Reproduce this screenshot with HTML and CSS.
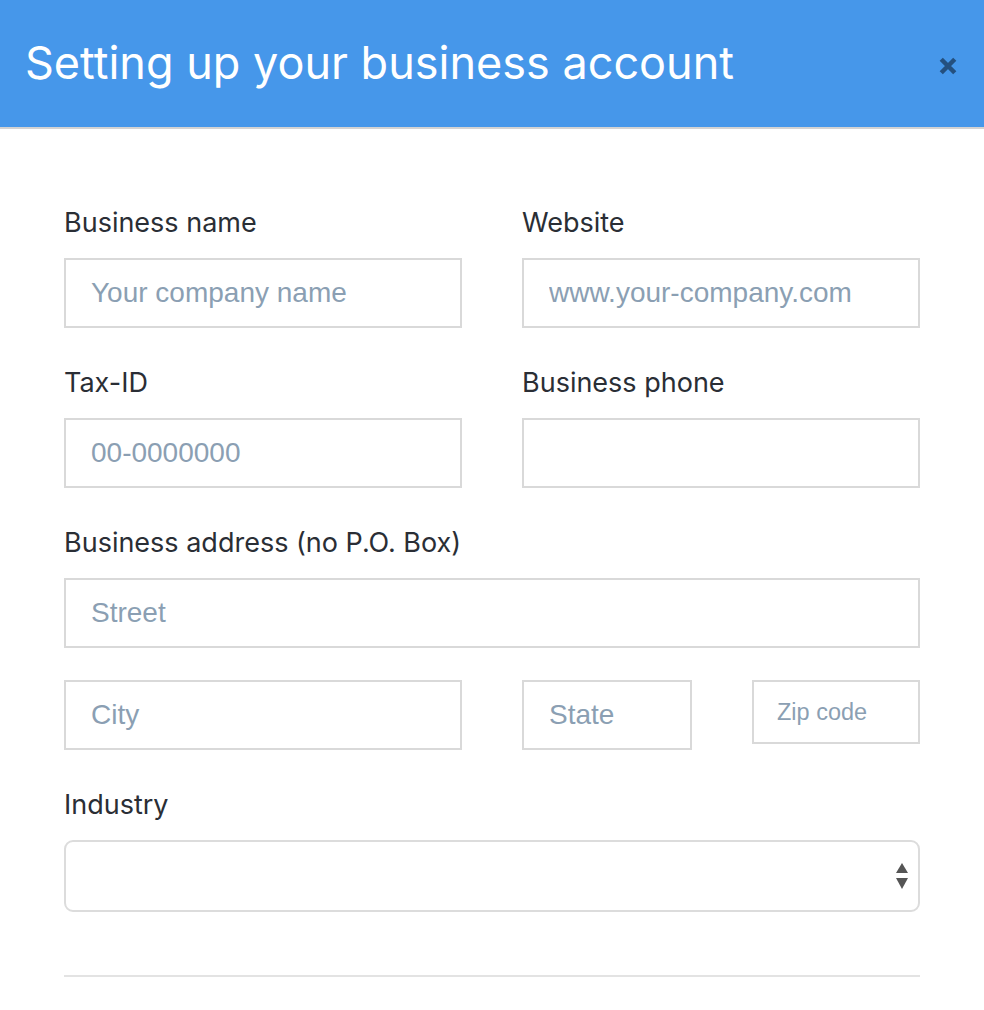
FILE: index.html
```html
<!DOCTYPE html>
<html>
<head>
<meta charset="utf-8">
<link rel="stylesheet" href="styles.css">
</head>
<body>
<div class="modal">
  <header class="header">
    <h1 class="title">Setting up your business account</h1>
    <button class="close" aria-label="Close">
      <svg width="18" height="18" viewBox="0 0 16 16"><path d="M2 2L14 14M14 2L2 14" stroke="#24507f" stroke-width="4" stroke-linecap="butt"/></svg>
    </button>
  </header>
  <form class="form">
    <div class="row two">
      <div class="field">
        <label class="label">Business name</label>
        <input class="input" placeholder="Your company name">
      </div>
      <div class="field">
        <label class="label">Website</label>
        <input class="input" placeholder="www.your-company.com">
      </div>
    </div>
    <div class="row two">
      <div class="field">
        <label class="label">Tax-ID</label>
        <input class="input" placeholder="00-0000000">
      </div>
      <div class="field">
        <label class="label">Business phone</label>
        <input class="input">
      </div>
    </div>
    <div class="field">
      <label class="label">Business address (no P.O. Box)</label>
      <input class="input" placeholder="Street">
    </div>
    <div class="row address">
      <input class="input" placeholder="City">
      <input class="input" placeholder="State">
      <input class="input small" placeholder="Zip code">
    </div>
    <div class="field industry">
      <label class="label">Industry</label>
      <div class="select">
        <span class="arrows">
          <svg width="12" height="26" viewBox="0 0 12 26"><path d="M6 0L12 10H0Z" fill="#555"/><path d="M0 15H12L6 26Z" fill="#555"/></svg>
        </span>
      </div>
    </div>
    <hr class="divider">
  </form>
</div>
</body>
</html>
```
FILE: styles.css
```css
* { box-sizing: border-box; }
html, body { margin: 0; padding: 0; background: #fff; }
body { font-family: Inter, "Liberation Sans", sans-serif; }
.modal { width: 984px; }
.header {
  height: 129px;
  background: #4697ea;
  border-bottom: 2px solid #d3d3d3;
  display: flex;
  align-items: center;
  justify-content: space-between;
  padding: 0 27px 0 25px;
}
.title {
  margin: 0;
  color: #fff;
  font-weight: 400;
  font-size: 45px;
  line-height: 1;
  padding-bottom: 2px;
}
.close {
  background: none;
  border: 0;
  padding: 0;
  margin-top: 4px;
  width: 18px;
  height: 18px;
  display: flex;
}
.form {
  padding: 76px 64px 0 64px;
  display: flex;
  flex-direction: column;
}
.row { display: grid; column-gap: 60px; }
.row.two { grid-template-columns: 1fr 1fr; margin-bottom: 37px; }
.field { display: flex; flex-direction: column; }
.label {
  font-size: 27px;
  line-height: 32px;
  color: #2a2e35;
  padding-top: 2px;
  margin-bottom: 19px;
}
.input {
  height: 70px;
  border: 2px solid #d9d9d9;
  border-radius: 0;
  padding: 0 25px;
  font-family: "Liberation Sans", Arial, sans-serif;
  font-size: 28px;
  color: #333;
  background: #fff;
  outline: none;
  width: 100%;
}
.input::placeholder { color: #8b9fb3; }
.input.small {
  height: 64px;
  font-size: 23.5px;
  padding: 0 23px;
}
.address {
  grid-template-columns: 398px 170px 168px;
  column-gap: 60px;
  align-items: start;
  margin-top: 32px;
  margin-bottom: 37px;
}
.select {
  height: 72px;
  border: 2px solid #dcdcdc;
  border-radius: 9px;
  display: flex;
  align-items: center;
  justify-content: flex-end;
  padding-right: 10px;
}
.arrows { display: flex; }
.divider {
  margin: 63px 0 0 0;
  border: 0;
  border-top: 2px solid #e3e3e3;
  height: 0;
}
```
